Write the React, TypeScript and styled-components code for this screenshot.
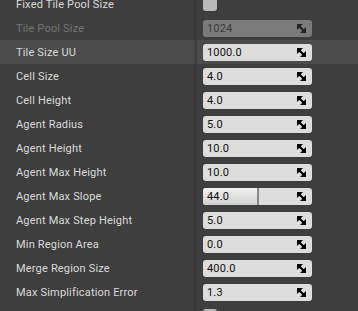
import React from 'react';
import styled, { createGlobalStyle } from 'styled-components';

const GlobalStyle = createGlobalStyle`
  html, body {
    margin: 0;
    padding: 0;
    background: #3e3e3e;
    overflow: hidden;
  }
  body {
    font-family: Roboto, "Liberation Sans", sans-serif;
  }
`;

type Prop = {
  name: string;
  kind: 'check' | 'number' | 'slider';
  value?: string;
  disabled?: boolean;
  hovered?: boolean;
  fill?: number;
};

const props: Prop[] = [
  { name: 'Fixed Tile Pool Size', kind: 'check' },
  { name: 'Tile Pool Size', kind: 'number', value: '1024', disabled: true },
  { name: 'Tile Size UU', kind: 'number', value: '1000.0', hovered: true },
  { name: 'Cell Size', kind: 'number', value: '4.0' },
  { name: 'Cell Height', kind: 'number', value: '4.0' },
  { name: 'Agent Radius', kind: 'number', value: '5.0' },
  { name: 'Agent Height', kind: 'number', value: '10.0' },
  { name: 'Agent Max Height', kind: 'number', value: '10.0' },
  { name: 'Agent Max Slope', kind: 'slider', value: '44.0', fill: 44 / 89 },
  { name: 'Agent Max Step Height', kind: 'number', value: '5.0' },
  { name: 'Min Region Area', kind: 'number', value: '0.0' },
  { name: 'Merge Region Size', kind: 'number', value: '400.0' },
  { name: 'Max Simplification Error', kind: 'number', value: '1.3' },
  { name: '', kind: 'check' },
];

// spin-box drag handle: two solid corner wedges joined by a thick diagonal
const SpinIcon = () => (
  <svg width="9" height="9" viewBox="0 0 9 9">
    <polygon points="0,0 6,0 0,6" fill="#000" />
    <polygon points="9,9 3,9 9,3" fill="#000" />
    <line x1="1" y1="1" x2="8" y2="8" stroke="#000" strokeWidth="2.2" />
  </svg>
);

export default function App() {
  return (
    <>
      <GlobalStyle />
      <Panel>
        {props.map((p, i) => (
          <Row key={i} $hovered={!!p.hovered}>
            <NameCell $disabled={!!p.disabled}>{p.name}</NameCell>
            <Splitter $hovered={!!p.hovered} />
            <ValueCell>
              {p.kind === 'check' ? (
                <CheckBox />
              ) : (
                <NumBox $disabled={!!p.disabled}>
                  {p.kind === 'slider' && (
                    <SliderFill style={{ width: `${(p.fill ?? 0) * 100}%` }} />
                  )}
                  <NumText $disabled={!!p.disabled}>{p.value}</NumText>
                  <IconSlot $disabled={!!p.disabled}>
                    <SpinIcon />
                  </IconSlot>
                </NumBox>
              )}
            </ValueCell>
          </Row>
        ))}
      </Panel>
    </>
  );
}

const Panel = styled.div`
  margin-top: -8px;
  display: flex;
  flex-direction: column;
  width: 358px;
`;

const Row = styled.div<{ $hovered: boolean }>`
  display: grid;
  grid-template-columns: 194px 3px 1fr;
  height: 24px;
  background: ${p => (p.$hovered ? '#4b4b4b' : '#3e3e3e')};
`;

const NameCell = styled.div<{ $disabled: boolean }>`
  display: flex;
  align-items: center;
  padding-left: 16px;
  font-size: 11px;
  letter-spacing: 0.18px;
  color: ${p => (p.$disabled ? '#747474' : '#dadada')};
  white-space: nowrap;
`;

const Splitter = styled.div<{ $hovered: boolean }>`
  background: ${p => (p.$hovered ? '#404040' : '#393939')};
`;

const ValueCell = styled.div`
  display: flex;
  align-items: center;
  padding-left: 6px;
`;

const CheckBox = styled.div`
  width: 14px;
  height: 14px;
  border-radius: 3px;
  background: #b9b9b9;
`;

const NumBox = styled.div<{ $disabled: boolean }>`
  position: relative;
  width: 109px;
  height: 17px;
  border-radius: 3px;
  background: ${p => (p.$disabled ? '#7b7b7b' : '#dddddd')};
  display: flex;
  align-items: center;
  overflow: hidden;
`;

const SliderFill = styled.div`
  position: absolute;
  left: 0;
  top: 0;
  bottom: 0;
  background: linear-gradient(#f2f2f2, #cfcfcf);
  border-right: 2px solid #8a8a8a;
`;

const NumText = styled.span<{ $disabled: boolean }>`
  position: relative;
  flex: 1;
  padding-left: 4px;
  font-size: 11px;
  letter-spacing: 0.18px;
  color: ${p => (p.$disabled ? '#3c3c3c' : '#111111')};
`;

const IconSlot = styled.span<{ $disabled: boolean }>`
  position: relative;
  display: flex;
  margin-right: 6px;
  margin-top: 1px;
  opacity: ${p => (p.$disabled ? 0.7 : 1)};
`;
